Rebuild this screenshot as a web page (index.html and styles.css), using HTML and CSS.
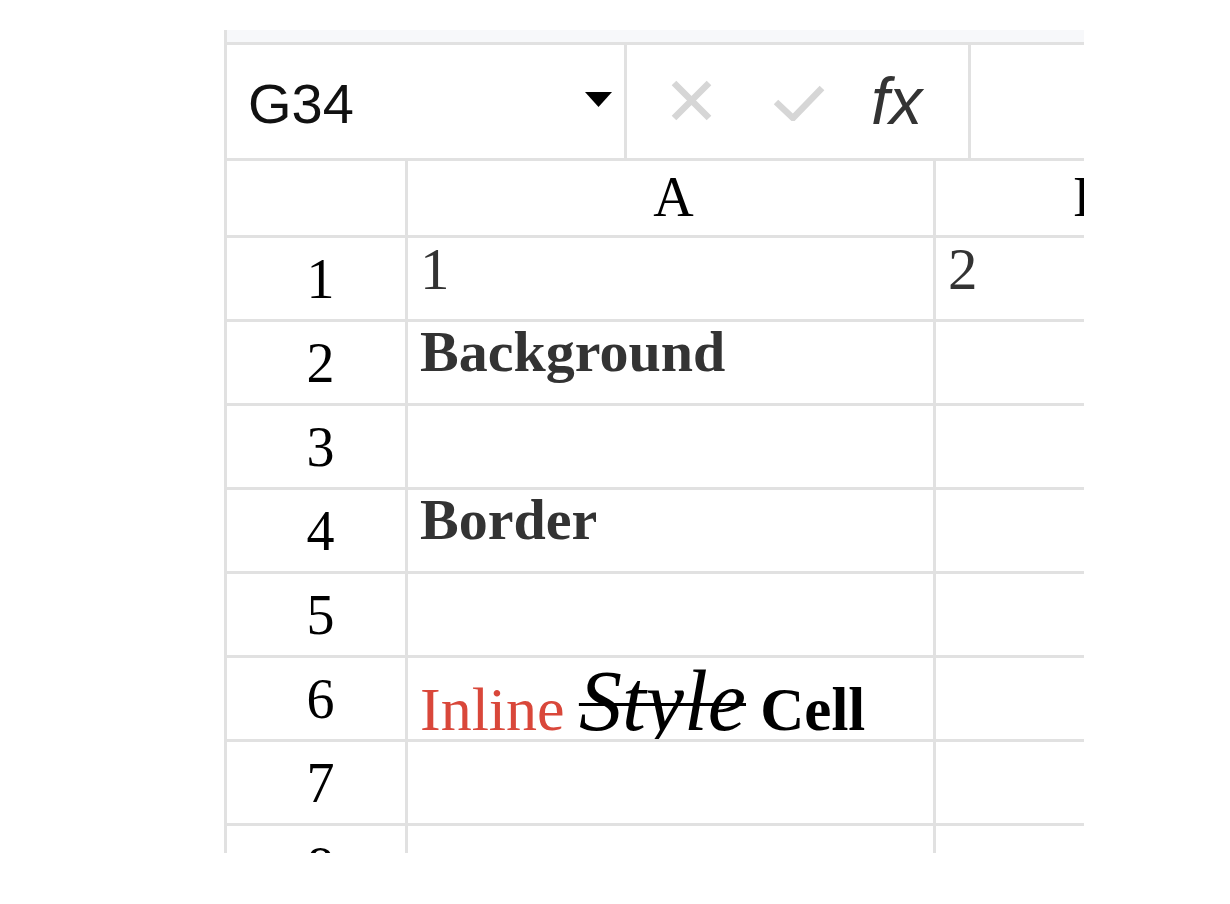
FILE: index.html
```html
<!DOCTYPE html>
<html lang="en">
<head>
<meta charset="utf-8">
<title>Sheet</title>
<link rel="stylesheet" href="styles.css">
</head>
<body>
<div class="sheet">
  <div class="strip"></div>
  <div class="formula-bar">
    <div class="name-box">
      <span class="name">G34</span>
      <svg class="caret" width="27" height="15" viewBox="0 0 27 15"><polygon points="0,0 27,0 13.5,15" fill="#000"/></svg>
    </div>
    <div class="fb-actions">
      <svg class="ic-x" width="43" height="43" viewBox="0 0 43 43"><path d="M4 4 L39 39 M39 4 L4 39" stroke="#d6d6d6" stroke-width="6.5" fill="none"/></svg>
      <svg class="ic-check" width="52" height="37" viewBox="0 0 52 37"><path d="M3 18 L20 34 L49 4" stroke="#d6d6d6" stroke-width="6.5" fill="none"/></svg>
      <span class="fx">fx</span>
    </div>
    <div class="fb-input"></div>
  </div>
  <div class="grid">
    <div class="hd corner"></div>
    <div class="hd col">A</div>
    <div class="hd col">B</div>

    <div class="rh">1</div>
    <div class="cell first">1</div>
    <div class="cell first">2</div>

    <div class="rh">2</div>
    <div class="cell bold">Background</div>
    <div class="cell"></div>

    <div class="rh">3</div>
    <div class="cell"></div>
    <div class="cell"></div>

    <div class="rh">4</div>
    <div class="cell bold">Border</div>
    <div class="cell"></div>

    <div class="rh">5</div>
    <div class="cell"></div>
    <div class="cell"></div>

    <div class="rh">6</div>
    <div class="cell mixed"><span class="red">Inline</span> <span class="styled">Style</span> <span class="strong">Cell</span></div>
    <div class="cell"></div>

    <div class="rh">7</div>
    <div class="cell"></div>
    <div class="cell"></div>

    <div class="rh">8</div>
    <div class="cell"></div>
    <div class="cell"></div>
  </div>
</div>
</body>
</html>
```

FILE: styles.css
```css
* { box-sizing: border-box; }
html, body { margin: 0; padding: 0; background: #fff; }

.sheet {
  margin: 30px 0 0 224px;
  width: 860px;
  height: 823px;
  overflow: hidden;
  border-left: 3px solid #e1e1e1;
  background: #fff;
}

.strip {
  height: 15px;
  background: #f7f8fa;
  border-bottom: 3px solid #e1e1e1;
}

.formula-bar {
  display: flex;
  height: 116px;
  border-bottom: 3px solid #e1e1e1;
}

.name-box {
  width: 400px;
  flex: none;
  display: flex;
  align-items: center;
  justify-content: space-between;
  padding: 4px 12px 0 21px;
  border-right: 3px solid #e1e1e1;
}
.name {
  font-family: "Liberation Sans", Arial, sans-serif;
  font-size: 56px;
  line-height: 1;
  color: #111;
}
.caret { display: block; margin-top: -8px; }

.fb-actions {
  width: 344px;
  flex: none;
  display: flex;
  align-items: center;
  padding-left: 43px;
  border-right: 3px solid #e1e1e1;
}
.ic-x { display: block; margin-top: -2px; }
.ic-check { display: block; margin-left: 60px; margin-top: 2px; }
.fx {
  margin-left: 46px;
  font-family: "Liberation Sans", Arial, sans-serif;
  font-style: italic;
  font-size: 66px;
  line-height: 1;
  color: #333;
  margin-top: -2px;
}
.fb-input { flex: 1; }

.grid {
  display: grid;
  grid-template-columns: 181px 528px 309px;
  grid-template-rows: 77px repeat(8, 84px);
  width: 1018px;
  font-family: "Liberation Serif", "Times New Roman", serif;
}

.hd, .rh, .cell {
  border-right: 3px solid #e1e1e1;
  border-bottom: 3px solid #e1e1e1;
  background: #fff;
}

.hd, .rh {
  display: flex;
  align-items: center;
  justify-content: center;
  font-size: 56px;
  line-height: 1;
  color: #000;
}
.hd.col { padding: 0 0 2px 6px; }
.rh { padding: 1px 0 0 9px; }

.cell {
  font-size: 57px;
  line-height: 1;
  color: #333;
  padding-left: 12px;
  white-space: nowrap;
  overflow: hidden;
}
.cell.first { font-size: 59px; padding-top: 2px; }
.cell.bold { font-weight: bold; font-size: 58px; padding-top: 1px; }

.cell.mixed { color: #000; }
.red { color: #d9473a; font-size: 62px; }
.styled {
  font-style: italic;
  font-size: 86px;
  text-decoration: line-through;
  text-decoration-thickness: 3px;
}
.strong { font-weight: bold; font-size: 61px; }
```
